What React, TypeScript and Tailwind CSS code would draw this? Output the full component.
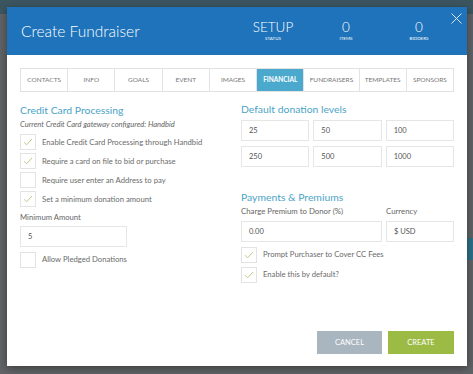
import React from 'react';

const tabs = ['CONTACTS', 'INFO', 'GOALS', 'EVENT', 'IMAGES', 'FINANCIAL', 'FUNDRAISERS', 'TEMPLATES', 'SPONSORS'];

const levels = ['25', '50', '100', '250', '500', '1000'];

function Check({ on }: { on: boolean }) {
  return (
    <div className="w-[16px] h-[16px] shrink-0 border border-[#e3e3e3] bg-white flex items-center justify-center">
      {on && (
        <svg width="10" height="8" viewBox="0 0 10 8" fill="none">
          <path d="M1 4.2L3.6 6.8L9 1" stroke="#b4c47c" strokeWidth="0.9" />
        </svg>
      )}
    </div>
  );
}

function CheckRow({ on, label }: { on: boolean; label: string }) {
  return (
    <div className="flex items-center gap-[6px]">
      <Check on={on} />
      <span className="text-[7.7px] text-[#6b6b6b] whitespace-nowrap">{label}</span>
    </div>
  );
}

function Field({ value, className }: { value: string; className?: string }) {
  return (
    <div className={`h-[21px] border border-[#e6e6e6] bg-white flex items-center px-[7px] text-[7.5px] text-[#555] ${className ?? ''}`}>
      {value}
    </div>
  );
}

export default function App() {
  return (
    <div className="w-[473px] h-[374px] overflow-hidden bg-[#606365] pt-[7px] pl-[7px] font-['Lato','Open_Sans',sans-serif] relative">
      <div className="absolute inset-x-0 top-0 h-[14px] bg-[#3c5660]" />
      <div className="absolute right-0 top-[238px] w-[8px] h-[22px] bg-[#2e6f86]" />
      <div className="relative w-[460px] h-[359px] bg-white shadow-[0_2px_8px_rgba(0,0,0,0.4)] flex flex-col">
        {/* header */}
        <div className="h-[48px] bg-[#1e73ba] flex items-center pl-[14px] relative">
          <h1 className="text-[15.5px] font-light text-white w-[225px] leading-none pt-[1px]">Create Fundraiser</h1>
          <div className="flex flex-col items-center w-[54px] text-white">
            <span className="text-[13.5px] leading-none font-light">SETUP</span>
            <span className="text-[4.5px] leading-none mt-[2px]">STATUS</span>
          </div>
          <div className="flex flex-col items-center w-[54px] ml-[19px] text-white">
            <span className="text-[13.5px] leading-none font-light">0</span>
            <span className="text-[4.5px] leading-none mt-[2px]">ITEMS</span>
          </div>
          <div className="flex flex-col items-center w-[54px] ml-[19px] text-white">
            <span className="text-[13.5px] leading-none font-light">0</span>
            <span className="text-[4.5px] leading-none mt-[2px]">BIDDERS</span>
          </div>
          <svg className="absolute right-[5px] top-[6px]" width="11" height="11" viewBox="0 0 11 11">
            <path d="M0.5 0.5L10.5 10.5M10.5 0.5L0.5 10.5" stroke="#dbe8f4" strokeWidth="1" />
          </svg>
        </div>

        <div className="px-[13px] pt-[13px]">
          {/* tabs */}
          <div className="flex h-[24px] border border-[#e2e2e2]">
            {tabs.map((t, i) => (
              <div
                key={t}
                className={`flex-1 flex items-center justify-center text-[6.5px] ${i > 0 ? 'border-l border-[#e2e2e2]' : ''} ${t === 'FINANCIAL' ? 'bg-[#4aa9cd] text-white font-bold' : 'text-[#777]'} ${t === 'FUNDRAISERS' ? 'grow-[1.17]' : ''}`}
              >
                {t}
              </div>
            ))}
          </div>

          <div className="flex gap-[21px] mt-[8px]">
            {/* left column */}
            <div className="w-[200px] flex flex-col">
              <h2 className="text-[10.4px] text-[#4ba3c6] leading-[16px] mt-[2px]">Credit Card Processing</h2>
              <p className="text-[7.55px] italic text-[#666] mt-[1px] mb-[4px] whitespace-nowrap">Current Credit Card gateway configured: Handbid</p>
              <div className="flex flex-col gap-[3px]">
                <CheckRow on label="Enable Credit Card Processing through Handbid" />
                <CheckRow on label="Require a card on file to bid or purchase" />
                <CheckRow on={false} label="Require user enter an Address to pay" />
                <CheckRow on label="Set a minimum donation amount" />
              </div>
              <span className="text-[7.7px] text-[#666] mt-[5px]">Minimum Amount</span>
              <Field value="5" className="w-[107px] mt-[2px]" />
              <div className="mt-[5px]">
                <CheckRow on={false} label="Allow Pledged Donations" />
              </div>
            </div>

            {/* right column */}
            <div className="flex-1 flex flex-col">
              <h2 className="text-[10.4px] text-[#4ba3c6] leading-[16px] mt-[1px]">Default donation levels</h2>
              <div className="grid grid-cols-3 gap-x-[4px] gap-y-[5px] mt-[3px]">
                {levels.map(l => (
                  <Field key={l} value={l} />
                ))}
              </div>
              <h2 className="text-[10.4px] text-[#4ba3c6] leading-[16px] mt-[22px]">Payments &amp; Premiums</h2>
              <div className="flex gap-[4px] mt-[1px]">
                <div className="flex-1 flex flex-col">
                  <span className="text-[7.8px] text-[#666] mb-[3px]">Charge Premium to Donor (%)</span>
                  <Field value="0.00" />
                </div>
                <div className="w-[68px] flex flex-col">
                  <span className="text-[7.8px] text-[#666] mb-[3px]">Currency</span>
                  <Field value="$ USD" />
                </div>
              </div>
              <div className="flex flex-col gap-[4px] mt-[5px]">
                <CheckRow on label="Prompt Purchaser to Cover CC Fees" />
                <CheckRow on label="Enable this by default?" />
              </div>
            </div>
          </div>
        </div>

        {/* footer */}
        <div className="mt-auto flex justify-end gap-[6px] px-[13px] pb-[12px]">
          <button className="w-[65px] h-[23px] bg-[#a9b6bf] text-white text-[7.5px]">CANCEL</button>
          <button className="w-[66px] h-[23px] bg-[#9cbb45] text-white text-[7.5px]">CREATE</button>
        </div>
      </div>
    </div>
  );
}
